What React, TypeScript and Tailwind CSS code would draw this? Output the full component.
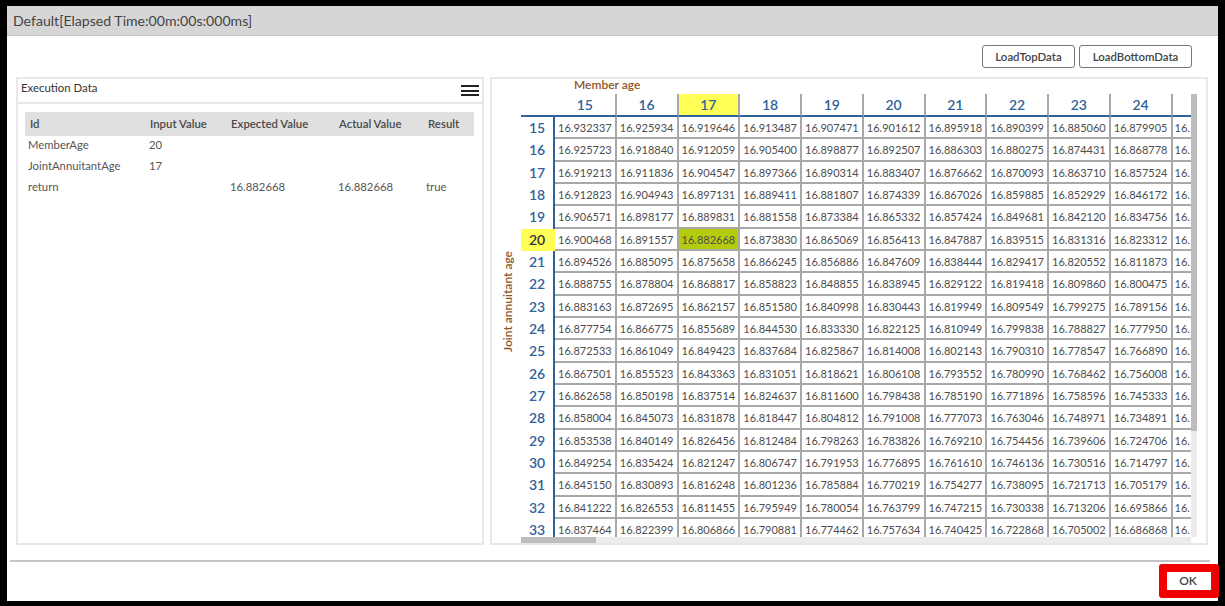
import React from 'react';

const columns = [15, 16, 17, 18, 19, 20, 21, 22, 23, 24];

const rows: [number, string[]][] = [
  [15, ['16.932337', '16.925934', '16.919646', '16.913487', '16.907471', '16.901612', '16.895918', '16.890399', '16.885060', '16.879905']],
  [16, ['16.925723', '16.918840', '16.912059', '16.905400', '16.898877', '16.892507', '16.886303', '16.880275', '16.874431', '16.868778']],
  [17, ['16.919213', '16.911836', '16.904547', '16.897366', '16.890314', '16.883407', '16.876662', '16.870093', '16.863710', '16.857524']],
  [18, ['16.912823', '16.904943', '16.897131', '16.889411', '16.881807', '16.874339', '16.867026', '16.859885', '16.852929', '16.846172']],
  [19, ['16.906571', '16.898177', '16.889831', '16.881558', '16.873384', '16.865332', '16.857424', '16.849681', '16.842120', '16.834756']],
  [20, ['16.900468', '16.891557', '16.882668', '16.873830', '16.865069', '16.856413', '16.847887', '16.839515', '16.831316', '16.823312']],
  [21, ['16.894526', '16.885095', '16.875658', '16.866245', '16.856886', '16.847609', '16.838444', '16.829417', '16.820552', '16.811873']],
  [22, ['16.888755', '16.878804', '16.868817', '16.858823', '16.848855', '16.838945', '16.829122', '16.819418', '16.809860', '16.800475']],
  [23, ['16.883163', '16.872695', '16.862157', '16.851580', '16.840998', '16.830443', '16.819949', '16.809549', '16.799275', '16.789156']],
  [24, ['16.877754', '16.866775', '16.855689', '16.844530', '16.833330', '16.822125', '16.810949', '16.799838', '16.788827', '16.777950']],
  [25, ['16.872533', '16.861049', '16.849423', '16.837684', '16.825867', '16.814008', '16.802143', '16.790310', '16.778547', '16.766890']],
  [26, ['16.867501', '16.855523', '16.843363', '16.831051', '16.818621', '16.806108', '16.793552', '16.780990', '16.768462', '16.756008']],
  [27, ['16.862658', '16.850198', '16.837514', '16.824637', '16.811600', '16.798438', '16.785190', '16.771896', '16.758596', '16.745333']],
  [28, ['16.858004', '16.845073', '16.831878', '16.818447', '16.804812', '16.791008', '16.777073', '16.763046', '16.748971', '16.734891']],
  [29, ['16.853538', '16.840149', '16.826456', '16.812484', '16.798263', '16.783826', '16.769210', '16.754456', '16.739606', '16.724706']],
  [30, ['16.849254', '16.835424', '16.821247', '16.806747', '16.791953', '16.776895', '16.761610', '16.746136', '16.730516', '16.714797']],
  [31, ['16.845150', '16.830893', '16.816248', '16.801236', '16.785884', '16.770219', '16.754277', '16.738095', '16.721713', '16.705179']],
  [32, ['16.841222', '16.826553', '16.811455', '16.795949', '16.780054', '16.763799', '16.747215', '16.730338', '16.713206', '16.695866']],
  [33, ['16.837464', '16.822399', '16.806866', '16.790881', '16.774462', '16.757634', '16.740425', '16.722868', '16.705002', '16.686868']],
];

const execution = [
  { id: 'MemberAge', input: '20', expected: '', actual: '', result: '' },
  { id: 'JointAnnuitantAge', input: '17', expected: '', actual: '', result: '' },
  { id: 'return', input: '', expected: '16.882668', actual: '16.882668', result: 'true' },
];

const ExecutionPanel = () => (
  <section className="w-[468px] border-2 border-[#e8e8e8] bg-white">
    <div className="flex h-[25px] items-center justify-between border-b-2 border-[#e8e8e8] pl-[3px] pr-[3px]">
      <span className="mb-[5px] text-[11.4px] text-[#333]">Execution Data</span>
      <div className="flex w-[18px] flex-col gap-[2.5px]">
        <div className="h-[2px] bg-[#222]"></div>
        <div className="h-[2px] bg-[#222]"></div>
        <div className="h-[2px] bg-[#222]"></div>
      </div>
    </div>
    <div className="pl-[7px] pr-[8px] pt-[8px]">
      <div className="grid h-[24px] grid-cols-[125px_81px_108px_89px_46px] items-center bg-[#e0e0e0] pb-[1px] text-[11.4px] font-semibold text-[#4a4a4a]">
        <span className="pl-[5px]">Id</span>
        <span>Input Value</span>
        <span>Expected Value</span>
        <span>Actual Value</span>
        <span>Result</span>
      </div>
      {execution.map((row) => (
        <div key={row.id} className="grid h-[21px] grid-cols-[124px_81px_108px_88px_48px] items-center pb-[2px] text-[11.3px] text-[#555]">
          <span className="pl-[3px]">{row.id}</span>
          <span>{row.input}</span>
          <span>{row.expected}</span>
          <span>{row.actual}</span>
          <span>{row.result}</span>
        </div>
      ))}
    </div>
  </section>
);

const MatrixPanel = () => (
  <section className="flex w-[718px] border-2 border-[#e8e8e8] bg-white">
    <div className="flex w-[29px] shrink-0 items-center justify-center pb-[36px] pl-[2px] pt-[16px]">
      <span className="rotate-180 text-[12px] font-semibold text-[#8f5526] [writing-mode:vertical-rl]">Joint annuitant age</span>
    </div>
    <div className="flex w-[676px] shrink-0 flex-col">
      <div className="h-[17px] pl-[53px] text-[12px] font-semibold leading-[12px] text-[#8f5526]">Member age</div>
      <div className="flex h-[449px]">
        <div className="flex w-[670px] flex-col">
          <div className="h-[443px] overflow-hidden">
            <div className="grid w-full grid-cols-[34px_repeat(10,61.75px)_1fr] grid-rows-[23px_repeat(19,22.33px)]">
              <div className="border-b-2 border-[#2f6299]"></div>
              {columns.map((col) => (
                <div
                  key={col}
                  className={`flex items-center justify-center border-b-2 border-r-2 border-b-[#2f6299] border-r-[#a8a8a8] text-[14px] font-semibold text-[#2f6299] ${col === 17 ? 'bg-[#ffff55]' : ''}`}
                >
                  {col}
                </div>
              ))}
              <div className="border-b-2 border-[#2f6299]"></div>
              {rows.map(([age, values]) => (
                <React.Fragment key={age}>
                  <div
                    className={`flex items-center justify-center border-r-2 text-[14px] font-semibold leading-none ${age === 20 ? 'border-r-[#ffff55] bg-[#ffff55] text-[#333]' : 'border-r-[#2f6299] text-[#2f6299]'}`}
                  >
                    {age}
                  </div>
                  {values.map((value, i) => (
                    <div
                      key={i}
                      className={`flex items-center justify-center border-b-2 border-r-2 border-[#a8a8a8] pt-[1px] text-[11px] leading-none text-[#4d4d4d] ${age === 20 && columns[i] === 17 ? 'bg-[#b5cc0c]' : ''}`}
                    >
                      {value}
                    </div>
                  ))}
                  <div className="flex items-center border-b-2 border-[#a8a8a8] pl-[2px] pt-[1px] text-[11px] leading-none text-[#4d4d4d]">16.</div>
                </React.Fragment>
              ))}
            </div>
          </div>
          <div className="h-[6px] bg-[#ececec]">
            <div className="h-full w-[75px] bg-[#bdbdbd]"></div>
          </div>
        </div>
        <div className="h-[443px] w-[6px] bg-[#ececec]">
          <div className="h-[337px] w-full bg-[#bdbdbd]"></div>
        </div>
      </div>
    </div>
  </section>
);

export default function App() {
  return (
    <div className="relative h-[606px] w-[1225px] overflow-hidden bg-black pb-[5px] pl-[7px] pr-[7px] pt-[6px] [font-family:Lato,'Liberation_Sans',sans-serif]">
      <div className="flex h-full flex-col bg-white">
        <header className="flex h-[30px] shrink-0 items-center border-b border-[#c4c4c4] bg-[#d6d6d6] pl-[6px] text-[14.1px] text-[#444]">
          Default[Elapsed Time:00m:00s:000ms]
        </header>
        <div className="flex justify-end gap-[4px] pr-[26px] pt-[9px]">
          <button className="h-[23px] w-[93px] rounded-[3px] border border-[#777] bg-white text-[11.4px] font-semibold text-[#444]">LoadTopData</button>
          <button className="h-[23px] w-[113px] rounded-[3px] border border-[#777] bg-white text-[11.4px] font-semibold text-[#444]">LoadBottomData</button>
        </div>
        <div className="mt-[9px] flex h-[468px] gap-[6px] pl-[9px]">
          <ExecutionPanel />
          <MatrixPanel />
        </div>
        <div className="ml-[3px] mr-[8px] mt-[15px] border-t-2 border-[#c4c4c4]"></div>
      </div>
      <button className="absolute left-[1159px] top-[564px] h-[34px] w-[60px] rounded-[3px] border-8 border-[#f00000] bg-white pr-[2px] text-[12px] font-semibold text-[#444]">OK</button>
    </div>
  );
}
